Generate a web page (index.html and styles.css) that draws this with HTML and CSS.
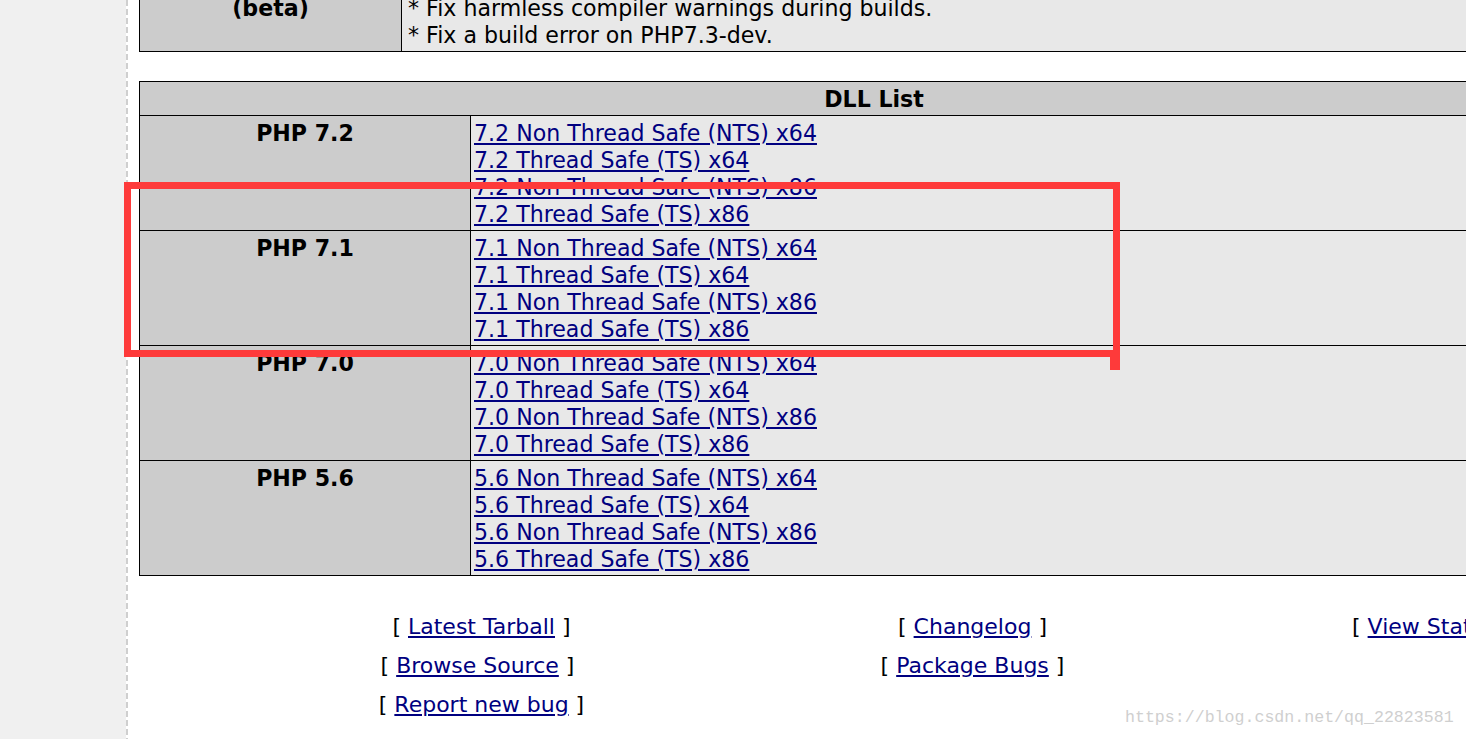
FILE: index.html
```html
<!DOCTYPE html>
<html>
<head>
<meta charset="utf-8">
<title>PECL package</title>
<link rel="stylesheet" href="styles.css">
</head>
<body>
<div class="layout">
  <aside class="sidebar"></aside>
  <div class="divider"></div>
  <main class="content">
    <table class="release">
      <tr>
        <th class="label">1.1.0<br>(beta)</th>
        <td class="notes">* Update package for PHP 7.3<br>* Fix harmless compiler warnings during builds.<br>* Fix a build error on PHP7.3-dev.</td>
      </tr>
    </table>

    <table class="dll">
      <tr><th class="head" colspan="2">DLL List</th></tr>
      <tr>
        <th class="label">PHP 7.2</th>
        <td class="links">
          <a href="#">7.2 Non Thread Safe (NTS) x64</a><br>
          <a href="#">7.2 Thread Safe (TS) x64</a><br>
          <a href="#">7.2 Non Thread Safe (NTS) x86</a><br>
          <a href="#">7.2 Thread Safe (TS) x86</a>
        </td>
      </tr>
      <tr>
        <th class="label">PHP 7.1</th>
        <td class="links">
          <a href="#">7.1 Non Thread Safe (NTS) x64</a><br>
          <a href="#">7.1 Thread Safe (TS) x64</a><br>
          <a href="#">7.1 Non Thread Safe (NTS) x86</a><br>
          <a href="#">7.1 Thread Safe (TS) x86</a>
        </td>
      </tr>
      <tr>
        <th class="label">PHP 7.0</th>
        <td class="links">
          <a href="#">7.0 Non Thread Safe (NTS) x64</a><br>
          <a href="#">7.0 Thread Safe (TS) x64</a><br>
          <a href="#">7.0 Non Thread Safe (NTS) x86</a><br>
          <a href="#">7.0 Thread Safe (TS) x86</a>
        </td>
      </tr>
      <tr>
        <th class="label">PHP 5.6</th>
        <td class="links">
          <a href="#">5.6 Non Thread Safe (NTS) x64</a><br>
          <a href="#">5.6 Thread Safe (TS) x64</a><br>
          <a href="#">5.6 Non Thread Safe (NTS) x86</a><br>
          <a href="#">5.6 Thread Safe (TS) x86</a>
        </td>
      </tr>
    </table>

    <div class="footer-links">
      <div class="cell">[ <a href="#">Latest Tarball</a> ]</div>
      <div class="cell">[ <a href="#">Changelog</a> ]</div>
      <div class="cell cell-right">[ <a href="#">View Statistics</a> ]</div>
      <div class="cell cell-shift">[ <a href="#">Browse Source</a> ]</div>
      <div class="cell">[ <a href="#">Package Bugs</a> ]</div>
      <div class="cell"></div>
      <div class="cell">[ <a href="#">Report new bug</a> ]</div>
      <div class="cell"></div>
      <div class="cell"></div>
    </div>
  </main>
</div>

<div class="annotation"></div>
<div class="annotation-tail"></div>
<div class="watermark">https://blog.csdn.net/qq_22823581</div>
</body>
</html>
```

FILE: styles.css
```css
html, body {
  margin: 0;
  padding: 0;
  background: #ffffff;
}

body {
  width: 1466px;
  height: 739px;
  overflow: hidden;
  position: relative;
  font-family: "DejaVu Sans", Verdana, sans-serif;
  font-size: 22px;
  line-height: 27px;
  color: #000;
}

.layout {
  display: flex;
  align-items: stretch;
  min-height: 739px;
}

.sidebar {
  width: 126px;
  flex: none;
  background: #f0f0f0;
}

.divider {
  width: 2px;
  flex: none;
  background: repeating-linear-gradient(to bottom, #cfcfcf 0 6px, transparent 6px 9px);
}

.content {
  flex: none;
  width: 1470px;
  margin-left: 11px;
  margin-top: -37px;
}

table {
  border-collapse: collapse;
  width: 1470px;
  border: 1px solid #000;
}

th, td {
  border: 1px solid #000;
  padding: 4px 3px 2px 3px;
  vertical-align: top;
  font-size: 22.1px;
  line-height: 27px;
}

th.label {
  background: #cccccc;
  font-weight: bold;
  text-align: center;
}

td.notes, td.links {
  background: #e8e8e8;
  text-align: left;
}

td.notes {
  padding-left: 6px;
}

.release th.label {
  width: 255px;
}

.dll {
  margin-top: 29px;
}

.dll th.head {
  background: #cccccc;
  font-weight: bold;
  text-align: center;
}

.dll th.label {
  width: 324px;
}

a {
  color: #000080;
  text-decoration: underline;
}

.footer-links {
  display: grid;
  grid-template-columns: repeat(3, 491px);
  row-gap: 12px;
  margin-top: 37px;
  padding-left: 97px;
}

.footer-links .cell {
  text-align: center;
  white-space: nowrap;
}

.footer-links .cell-shift {
  padding-right: 8px;
}

.footer-links .cell-right {
  padding-right: 32px;
}

.annotation {
  position: absolute;
  left: 124px;
  top: 182px;
  width: 982px;
  height: 161px;
  border: 7px solid #fe3a3a;
}

.annotation-tail {
  position: absolute;
  left: 1110px;
  top: 350px;
  width: 10px;
  height: 20px;
  background: #fe3a3a;
}

.watermark {
  position: absolute;
  left: 1125px;
  top: 706px;
  font-family: "Liberation Mono", "DejaVu Sans Mono", monospace;
  font-size: 16.6px;
  line-height: 24px;
  color: #cfcfcf;
  white-space: nowrap;
}
```
